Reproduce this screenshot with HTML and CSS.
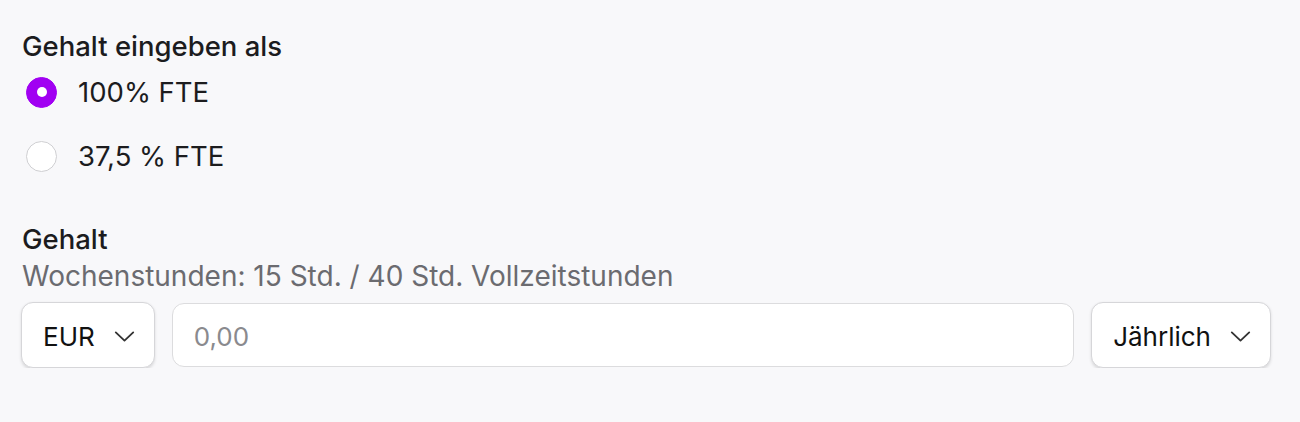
FILE: index.html
```html
<!DOCTYPE html>
<html lang="de">
<head>
    <meta charset="UTF-8">
    <meta name="viewport" content="width=device-width, initial-scale=1.0">
    <title>Gehalt</title>
    <link rel="stylesheet" href="styles.css">
</head>
<body>
    <div class="form">
        <!-- Eingabeart -->
        <div class="field">
            <p class="field-label">Gehalt eingeben als</p>
            <div class="radio-list">
                <label class="radio-row">
                    <span class="radio checked"></span>
                    <span class="radio-text">100% FTE</span>
                </label>
                <label class="radio-row">
                    <span class="radio"></span>
                    <span class="radio-text">37,5 % FTE</span>
                </label>
            </div>
        </div>

        <!-- Gehalt -->
        <div class="field salary">
            <p class="field-label">Gehalt</p>
            <p class="field-hint">Wochenstunden: 15 Std. / 40 Std. Vollzeitstunden</p>
            <div class="salary-row">
                <button class="select">
                    <span>EUR</span>
                    <svg class="chevron" viewBox="0 0 22 12" width="21" height="11"><polyline points="1.5,1.5 11,10.5 20.5,1.5"/></svg>
                </button>
                <input class="amount" type="text" placeholder="0,00">
                <button class="select">
                    <span>Jährlich</span>
                    <svg class="chevron" viewBox="0 0 22 12" width="21" height="11"><polyline points="1.5,1.5 11,10.5 20.5,1.5"/></svg>
                </button>
            </div>
        </div>
    </div>
</body>
</html>
```

FILE: styles.css
```css
* {
    margin: 0;
    padding: 0;
    box-sizing: border-box;
}

body {
    font-family: 'Inter', 'Liberation Sans', sans-serif;
    background: #f8f8fa;
    color: #1c1c1e;
}

.form {
    padding: 30px 29px 0 21px;
}

.field-label {
    font-size: 27.5px;
    line-height: 33px;
    font-weight: 500;
    padding-left: 1px;
}

/* radios */
.radio-list {
    display: flex;
    flex-direction: column;
    gap: 16px;
    margin-top: 5px;
}

.radio-row {
    display: flex;
    align-items: center;
    height: 48px;
    gap: 21px;
    padding-left: 5px;
    cursor: pointer;
}

.radio {
    width: 31px;
    height: 31px;
    border-radius: 50%;
    background: #fff;
    border: 1.5px solid #cfcfd2;
    display: flex;
    align-items: center;
    justify-content: center;
}

.radio.checked {
    background: #a100f2;
    border-color: #a100f2;
}

.radio.checked::after {
    content: '';
    width: 10px;
    height: 10px;
    border-radius: 50%;
    background: #fff;
}

.radio-text {
    font-size: 27.5px;
}

/* Gehalt */
.salary {
    margin-top: 43px;
}

.field-hint {
    font-size: 28px;
    line-height: 33px;
    color: #6b6b70;
    margin-top: 4px;
    padding-left: 1px;
}

.salary-row {
    display: flex;
    align-items: center;
    gap: 17px;
    margin-top: 9px;
}

.select {
    display: flex;
    align-items: center;
    gap: 19px;
    height: 66px;
    padding: 2px 19px 0 21px;
    background: #fff;
    border: 1.5px solid #d6d6d9;
    border-radius: 12px;
    box-shadow: 0 1.5px 3px rgba(0, 0, 0, 0.12);
    font-family: inherit;
    font-size: 26px;
    color: #111;
    cursor: pointer;
}

.chevron {
    fill: none;
    stroke: #333;
    stroke-width: 2;
    stroke-linecap: round;
    stroke-linejoin: round;
}

.amount {
    flex: 1;
    height: 64px;
    padding: 2px 21px 0;
    background: #fff;
    border: 1.5px solid #dcdcde;
    border-radius: 12px;
    font-family: inherit;
    font-size: 26px;
    color: #111;
    outline: none;
}

.amount::placeholder {
    color: #8a8a8e;
}
```
